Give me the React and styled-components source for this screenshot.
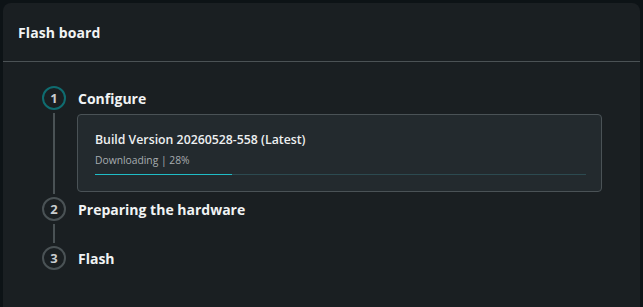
import React from "react";
import styled, { createGlobalStyle } from "styled-components";

const GlobalStyle = createGlobalStyle`
  html, body {
    margin: 0;
    padding: 0;
    background: #0d1316;
  }
  body {
    font-family: "Open Sans", "Noto Sans", sans-serif;
    color: #e8eaeb;
  }
`;

const Page = styled.div`
  padding: 3px 3px 0 3px;
  height: 307px;
  box-sizing: border-box;
`;

const Panel = styled.div`
  background: #1a1f22;
  border-radius: 8px 8px 0 0;
  height: 100%;
`;

const Header = styled.div`
  height: 58px;
  display: flex;
  align-items: center;
  padding: 0 15px;
  border-bottom: 1px solid #4b5255;
`;

const Title = styled.h1`
  margin: 0;
  font-size: 14px;
  font-weight: 700;
  color: #f1f3f4;
  letter-spacing: 0.1px;
`;

const Body = styled.div`
  padding: 24px 38px 0 39px;
`;

const Step = styled.div`
  display: flex;
  gap: 12px;
`;

const Rail = styled.div`
  width: 24px;
  display: flex;
  flex-direction: column;
  align-items: center;
  flex-shrink: 0;
`;

const Circle = styled.div`
  width: 24px;
  height: 24px;
  box-sizing: border-box;
  border-radius: 50%;
  border: 2px solid ${(p) => (p.$active ? "#0f6c70" : "#4a5255")};
  display: flex;
  align-items: center;
  justify-content: center;
  font-size: 13px;
  font-weight: 700;
  color: #c9cdcf;
`;

const Connector = styled.div`
  width: 2px;
  flex: 1;
  margin: 3px 0 3px;
  background: #4a5255;
`;

const Content = styled.div`
  flex: 1;
  padding-bottom: ${(p) => p.$gap}px;
`;

const StepLabel = styled.div`
  height: 24px;
  display: flex;
  align-items: center;
  font-size: 14px;
  font-weight: 700;
  color: #f1f3f4;
`;

const Card = styled.div`
  margin: 4px 0 0 -1px;
  background: #232a2e;
  border: 1px solid #4a5256;
  border-radius: 4px;
  padding: 16px 15px 16px 17px;
`;

const BuildTitle = styled.div`
  font-size: 12.3px;
  font-weight: 600;
  line-height: 18px;
  color: #eef0f1;
`;

const Status = styled.div`
  margin-top: 4px;
  font-size: 10.3px;
  line-height: 14px;
  color: #a7adb0;
`;

const Track = styled.div`
  margin-top: 7px;
  height: 1px;
  background: #2c4a50;
`;

const Fill = styled.div`
  height: 100%;
  background: #1fbcc6;
`;

const steps = [
  { n: 1, label: "Configure", active: true },
  { n: 2, label: "Preparing the hardware" },
  { n: 3, label: "Flash", last: true },
];

export default function App() {
  const progress = 28;
  return (
    <>
      <GlobalStyle />
      <Page>
        <Panel>
          <Header>
            <Title>Flash board</Title>
          </Header>
          <Body>
            {steps.map((s) => (
              <Step key={s.n}>
                <Rail>
                  <Circle $active={s.active}>{s.n}</Circle>
                  {!s.last && <Connector />}
                </Rail>
                <Content $gap={s.active ? 5 : s.last ? 0 : 25}>
                  <StepLabel>{s.label}</StepLabel>
                  {s.active && (
                    <Card>
                      <BuildTitle>Build Version 20260528-558 (Latest)</BuildTitle>
                      <Status>Downloading | {progress}%</Status>
                      <Track>
                        <Fill style={{ width: `${progress}%` }} />
                      </Track>
                    </Card>
                  )}
                </Content>
              </Step>
            ))}
          </Body>
        </Panel>
      </Page>
    </>
  );
}
